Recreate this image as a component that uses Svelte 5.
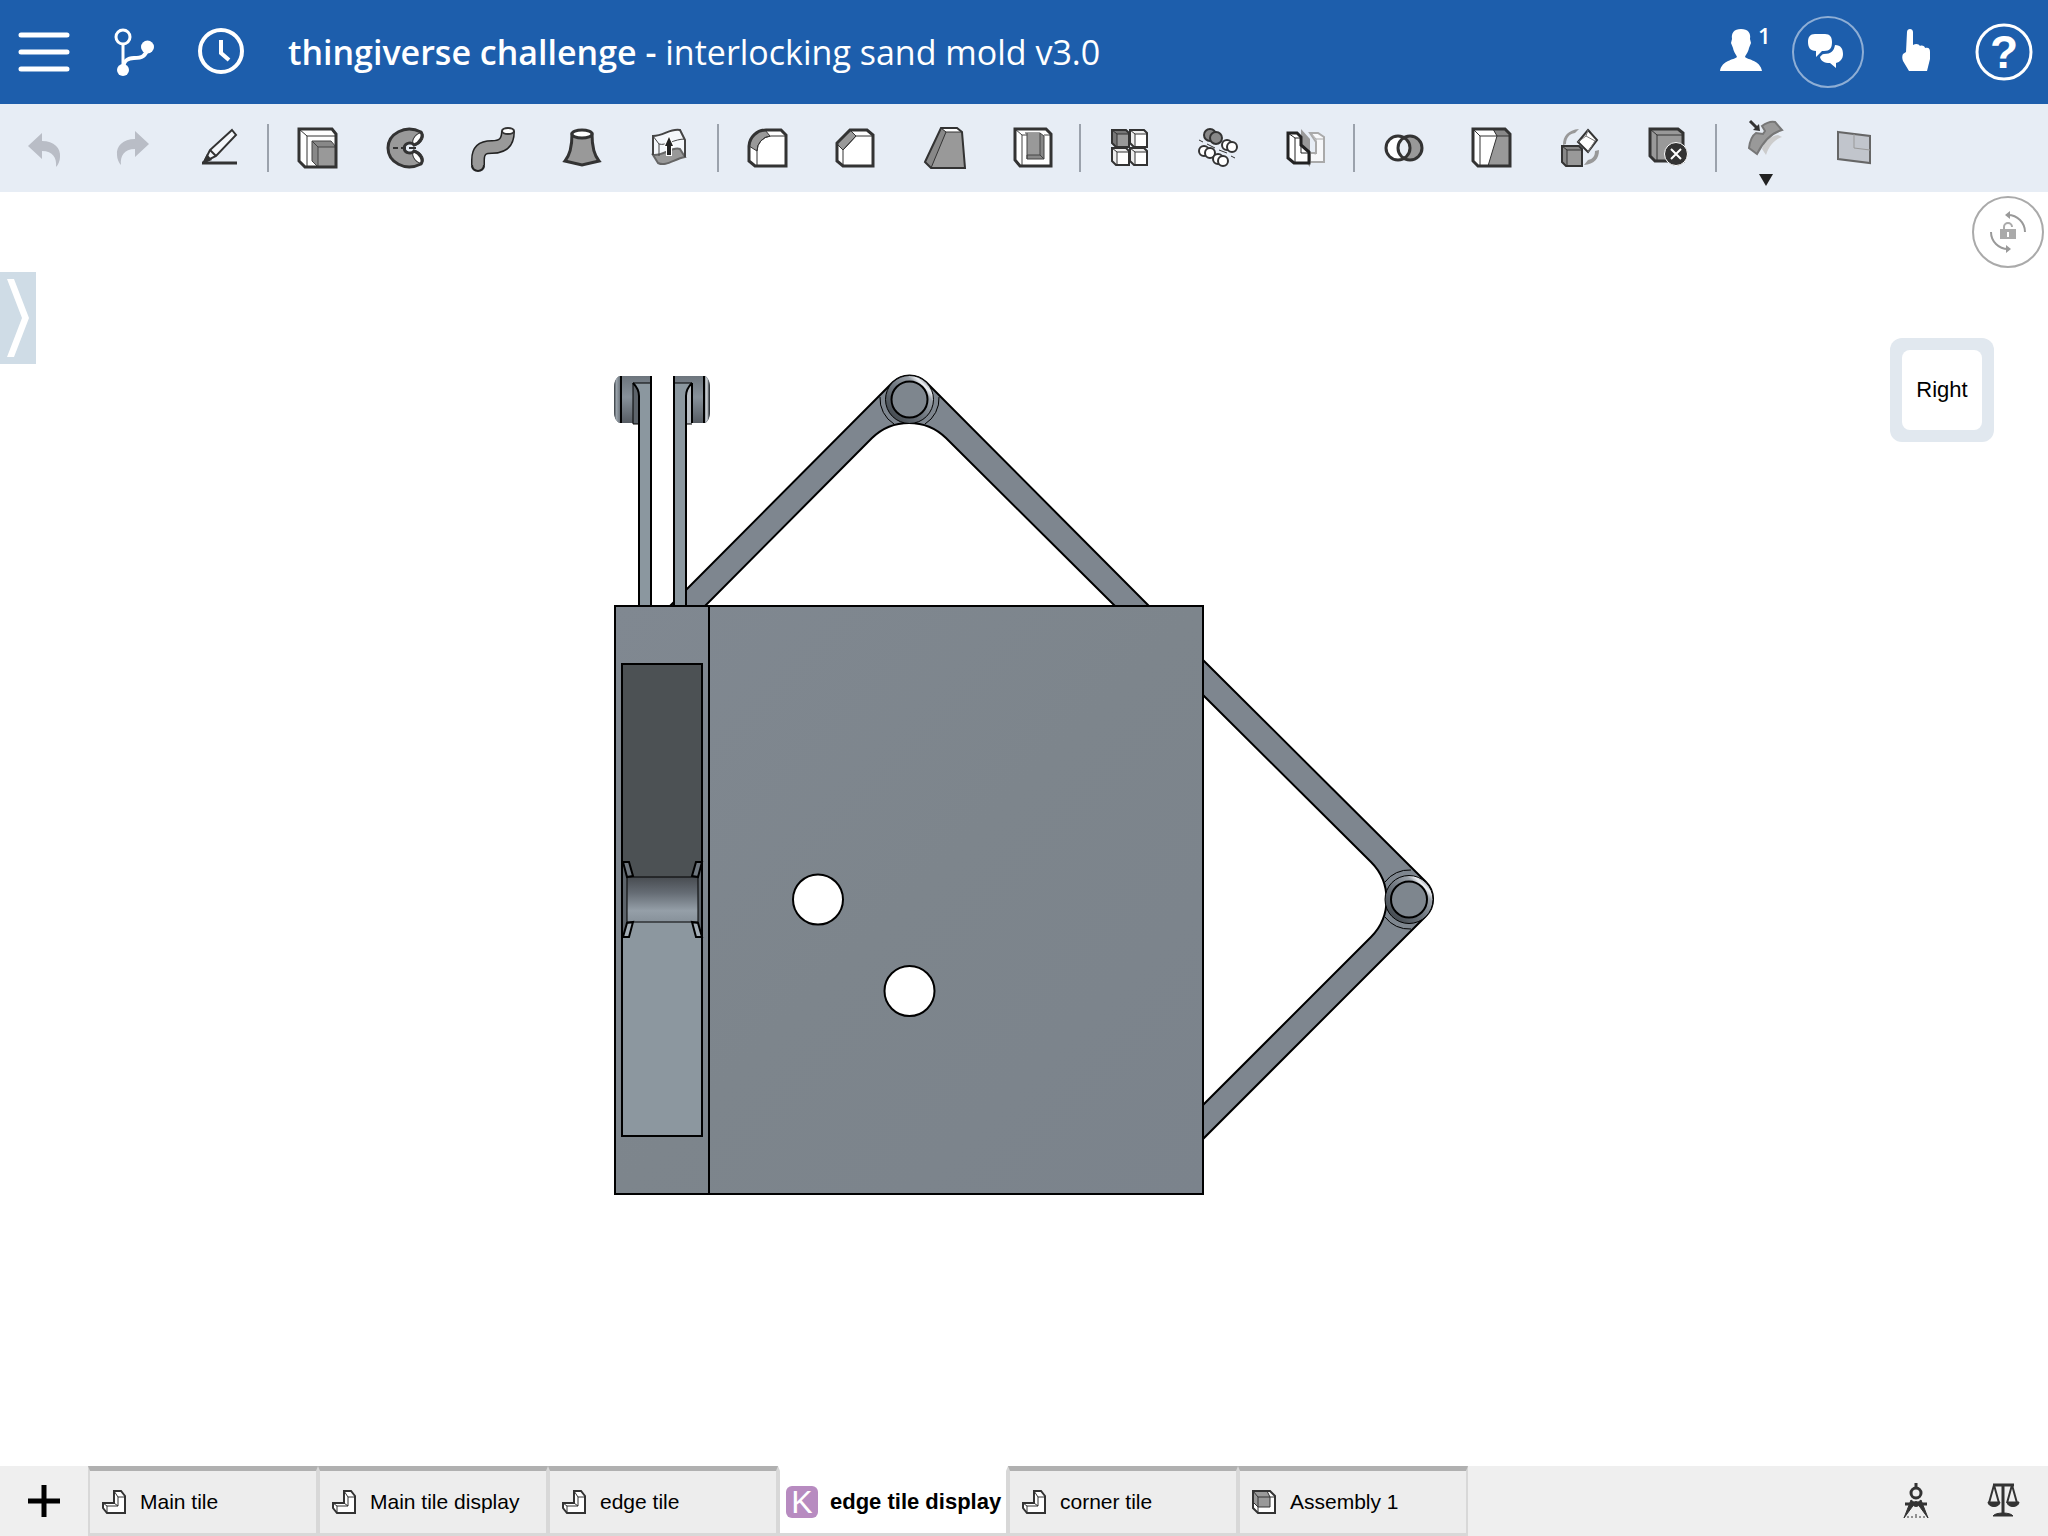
<script lang="ts">
    type Tab = { name: string; kind: string };

    const tabs: Tab[] = [
        { name: "Main tile", kind: "part" },
        { name: "Main tile display", kind: "part" },
        { name: "edge tile", kind: "part" },
        { name: "edge tile display", kind: "user" },
        { name: "corner tile", kind: "part" },
        { name: "Assembly 1", kind: "assembly" }
    ];

    let active = $state("edge tile display");
</script>

<!-- small cube used by the pattern and transform tools -->
{#snippet cube(x: number, y: number, s: number, front: string, top: string)}
    <g transform="translate({x} {y})">
        <path d="M0 0H{s - 3}L{s} 3V{s}H4L0 {s - 4}Z" fill={top} stroke="#333" stroke-width="2" />
        <path d="M5 4H{s - 1}V{s - 1}H5Z" fill={front} />
        <path d="M0 0L5 4H{s}M5 4V{s}" fill="none" stroke="#333" />
    </g>
{/snippet}

<div class="app">
    <header>
        <button aria-label="Menu">
            <svg viewBox="-44 -52 88 104">
                <path d="M-23-17H23M-23 0H23M-23 17H23" fill="none" stroke="#fff" stroke-width="5" stroke-linecap="round" />
            </svg>
        </button>
        <button aria-label="Versions and branches">
            <svg viewBox="-44 -52 88 104">
                <g fill="none" stroke="#fff">
                    <circle cx="-9" cy="-15" r="7" stroke-width="3" />
                    <path d="M-9-7V16" stroke-width="3" />
                    <path d="M-9 16C-8 8-4 6 2 6C10 6 14 4 15-3" stroke-width="4" />
                </g>
                <circle cx="-9" cy="18" r="6" fill="#fff" />
                <circle cx="15.500" cy="-5" r="6.500" fill="#fff" />
            </svg>
        </button>
        <button aria-label="History">
            <svg viewBox="-44 -52 88 104">
                <g fill="none" stroke="#fff">
                    <circle cx="1" cy="-1" r="21" stroke-width="4" />
                    <path d="M1-12V1L9 8" stroke-width="4" />
                </g>
            </svg>
        </button>
        <h1><b>thingiverse challenge -</b> interlocking sand mold v3.0</h1>
        <button aria-label="Collaborators">
            <svg viewBox="-44 -52 88 104">
                <path d="M1-23C8-23 11-19 10-13L11-9L9-4C8 1 6 2 5 5C8 8 20 8 22 19H-20C-18 8-6 8-3 5C-4 2-6 1-7-4L-9-9L-8-13C-9-19-6-23 1-23Z" fill="#fff" />
                <text x="18" y="-8" font-size="22" font-weight="600" fill="#fff">1</text>
            </svg>
        </button>
        <button aria-label="Comments">
            <svg viewBox="-44 -52 88 104">
                <circle r="35" fill="none" stroke="#8eaed5" stroke-width="2" />
                <path d="M-13-18H-3C2-18 4-15 4-10C4-4 2-1-4-1H-6L-12 5V-1C-18-1-20-5-20-10C-20-15-18-18-13-18Z" fill="#fff" />
                <path d="M7-7C13-7 15-3 15 2C15 7 12 10 8 11V16L2 11C-4 11-7 9-8 5C-7 4-6 2-4 2C3 2 6-1 7-7Z" fill="#fff" />
            </svg>
        </button>
        <button aria-label="Touch mode">
            <svg viewBox="-44 -52 88 104">
                <path d="M-9-20C-9-24-3-24-3-20V-7C0-9 3-8 4-6C6-7 9-6 9-4C13-5 14-3 14 0V7L11 19H-7L-13 9C-14 6-14 4-13 2L-10 0Z" fill="#fff" />
            </svg>
        </button>
        <button aria-label="Help">
            <svg viewBox="-44 -52 88 104">
                <circle r="27" fill="none" stroke="#fff" stroke-width="3" />
                <text class="question" y="16" font-size="46" text-anchor="middle" fill="#fff">?</text>
            </svg>
        </button>
    </header>

    <nav class="toolbar" aria-label="Feature tools">
        <button aria-label="Undo" disabled>
            <svg viewBox="-44 -44 88 88">
                <path d="M-16-2L-2-15V-7C10-7 17 0 16 9C16 13 14 17 12 19C13 10 9 3-2 3V11Z" fill="#b9bdc6" />
            </svg>
        </button>
        <button aria-label="Redo" disabled>
            <svg viewBox="-44 -44 88 88">
                <path d="M17-4L3-17V-9C-9-9-16-2-15 7C-15 11-13 15-11 17C-12 8-8 1 3 1V9Z" fill="#b9bdc6" />
            </svg>
        </button>
        <button aria-label="Sketch">
            <svg viewBox="-44 -44 88 88">
                <path d="M-18 15H17" fill="none" stroke="#333" stroke-width="3" />
                <path d="M12-18L16-13L-4 8L-16 14L-10 2Z" fill="#f4f7fb" stroke="#333" stroke-width="2" />
                <path d="M-10 2L-4 8" fill="none" stroke="#333" stroke-width="2" />
                <path d="M-18 16L-13 6L-8 12Z" fill="#333" />
            </svg>
        </button>
        <span class="sep"></span>

        <button aria-label="Extrude">
            <svg viewBox="-44 -44 88 88">
                <path d="M-19-19H14L18-14V19H-13L-19 13Z" fill="#fff" />
                <path d="M-19-19L-11-12H18M-11-12V19" fill="none" stroke="#333" />
                <path d="M-6-7H13L18-1V19H0L-6 13Z" fill="#888" />
                <path d="M0-1H18V19H0Z" fill="#999" />
                <path d="M0 19V-1H18M0-1L-6-7V13L0 19M-6-7H13L18-1" fill="none" stroke="#444" />
                <path d="M-19-19H14L18-14V19H-13L-19 13Z" fill="none" stroke="#333" stroke-width="3" />
            </svg>
        </button>
        <button aria-label="Revolve">
            <svg viewBox="-44 -44 88 88">
                <path d="M15-16C-1-24-18-14-18 0S-1 24 15 16C18 12 14 5 8 3C6 6-1 6-2 0C-1-6 6-6 8-3C14-5 18-12 15-16Z" fill="#999" />
                <ellipse cx="12" cy="-9" rx="4" ry="7" fill="#fff" stroke="#333" transform="rotate(38 12 -9)" />
                <ellipse cx="12" cy="9" rx="4" ry="7" fill="#fff" stroke="#333" transform="rotate(-38 12 9)" />
                <path d="M15-16C-1-24-18-14-18 0S-1 24 15 16C18 12 14 5 8 3C6 6-1 6-2 0C-1-6 6-6 8-3C14-5 18-12 15-16Z" fill="none" stroke="#333" stroke-width="3" />
                <path d="M-13 0H-8M-5 0H0M3 0H10" fill="none" stroke="#333" stroke-width="2" />
            </svg>
        </button>
        <button aria-label="Sweep">
            <svg viewBox="-44 -44 88 88">
                <path d="M-16 17V12C-16 2-11-1-2-1C9-1 14-6 14-17" fill="none" stroke="#222" stroke-width="14" />
                <ellipse cx="-16" cy="18" rx="7" ry="6" fill="#222" />
                <path d="M-16 17V12C-16 2-11-1-2-1C9-1 14-6 14-17" fill="none" stroke="#999" stroke-width="11" />
                <ellipse cx="-16" cy="17" rx="5" ry="5" fill="#999" />
                <ellipse cx="14" cy="-17" rx="6" ry="3" fill="#fff" stroke="#333" stroke-width="2" />
            </svg>
        </button>
        <button aria-label="Loft">
            <svg viewBox="-44 -44 88 88">
                <path d="M-10-14C-10 0-12 7-17 13L0 17L17 13C12 7 10 0 10-14Z" fill="#999" stroke="#333" stroke-width="3" />
                <ellipse cy="-14" rx="10" ry="4" fill="#fff" stroke="#333" stroke-width="3" />
            </svg>
        </button>
        <button aria-label="Thicken">
            <svg viewBox="-44 -44 88 88">
                <path d="M-17-12C-6-12 0-20 10-18L15-8V9C4 10-4 19-12 15L-17 7Z" fill="#f4f7fb" />
                <path d="M-17 7C-6 8 2-2 10 1L15 9C4 11-4 19-12 15Z" fill="#999" stroke="#666" stroke-width="2" />
                <path d="M-17 7V-12C-6-12 0-20 10-18L15-8V9" fill="none" stroke="#444" stroke-width="2" />
                <path d="M-17-12L-11-4V8M-11-4C-4-2 4-9 15-9" fill="none" stroke="#444" />
                <path d="M-1-11L3-2H1V7H-3V-2H-5Z" fill="#222" stroke="#fff" stroke-width="2" paint-order="stroke" />
            </svg>
        </button>
        <span class="sep"></span>

        <button aria-label="Fillet">
            <svg viewBox="-44 -44 88 88">
                <path d="M-19 13V-2A17 17 0 0 1-2-18H13L18-13V18H-13Z" fill="#fff" />
                <path d="M-19-2A17 17 0 0 1-3-18L2-12A15 15 0 0 0-11 3Z" fill="#999" stroke="#333" />
                <path d="M-11 18V3A15 15 0 0 1 3-12H18" fill="none" stroke="#333" />
                <path d="M-19 13V-2A17 17 0 0 1-2-18H13L18-13V18H-13Z" fill="none" stroke="#333" stroke-width="3" />
            </svg>
        </button>
        <button aria-label="Chamfer">
            <svg viewBox="-44 -44 88 88">
                <path d="M-19 13V-5L-6-18H11L17-13V18H-13Z" fill="#fff" />
                <path d="M-19-4L-6-18L0-12L-13 2Z" fill="#999" stroke="#333" />
                <path d="M-13 18V2L0-12H17" fill="none" stroke="#333" />
                <path d="M-19 13V-5L-6-18H11L17-13V18H-13Z" fill="none" stroke="#333" stroke-width="3" />
            </svg>
        </button>
        <button aria-label="Draft">
            <svg viewBox="-44 -44 88 88">
                <path d="M-19 14L-3-20H13L18-16L21 20H-13Z" fill="#999" />
                <path d="M-3-20H13L18-16H2Z" fill="#fff" />
                <path d="M-19 14L-3-20L2-16L-13 20Z" fill="#888" />
                <path d="M-3-20L2-16H18M2-16L-13 20" fill="none" stroke="#333" />
                <path d="M-19 14L-3-20H13L18-16L21 20H-13Z" fill="none" stroke="#333" stroke-width="2" />
            </svg>
        </button>
        <button aria-label="Shell">
            <svg viewBox="-44 -44 88 88">
                <path d="M-17-19H14L19-14V18H-12L-17 12Z" fill="#fff" />
                <path d="M-17-19L-10-13H-5M12-13H19M-10-13V18M-7-15H8" fill="none" stroke="#444" />
                <path d="M-5-15H8V7H-5Z" fill="#999" />
                <path d="M8-15L12-12V11H-5V7H8Z" fill="#888" stroke="#444" />
                <path d="M8 7L12 11M-5-15V11" fill="none" stroke="#444" />
                <path d="M-17-19H14L19-14V18H-12L-17 12Z" fill="none" stroke="#333" stroke-width="3" />
            </svg>
        </button>
        <span class="sep"></span>

        <button aria-label="Linear pattern">
            <svg viewBox="-44 -44 88 88">
                {@render cube(-18, -18, 17, "#999", "#777")}
                {@render cube(0, -18, 17, "#fff", "#eee")}
                {@render cube(-18, 0, 17, "#fff", "#eee")}
                {@render cube(0, 0, 17, "#fff", "#eee")}
            </svg>
        </button>
        <button aria-label="Circular pattern">
            <svg viewBox="-44 -44 88 88">
                <g fill="#fff" stroke="#333" stroke-width="2">
                    <g fill="#888"><circle cx="-8" cy="-13" r="6" /><circle cx="-2" cy="-10" r="6" /></g>
                    <circle cx="9" cy="-3" r="5" /><circle cx="14" cy="-1" r="5" />
                    <circle cx="-14" cy="3" r="5" /><circle cx="-8" cy="5" r="5" />
                    <circle cx="0" cy="11" r="5" /><circle cx="5" cy="13" r="5" />
                </g>
                <path d="M-19-8L-15-6M-11-4L-3 0M1 2L9 5M13 8L17 10" fill="none" stroke="#333" />
            </svg>
        </button>
        <button aria-label="Mirror">
            <svg viewBox="-44 -44 88 88">
                <path d="M4-15H12L18-11V14H4V5H10V-6L4-15Z" fill="#f7f8fa" stroke="#aaa" stroke-width="2" />
                <path d="M5 5L10 6V-9L5-15M10-9H18" fill="none" stroke="#aaa" />
                <path d="M-5-19L4-9V19L-5 9Z" fill="#999" />
                <path d="M-18-15H-9L-5-11V-3L3 4V15H-12L-18 10Z" fill="#fff" stroke="#222" stroke-width="3" />
                <path d="M-18-15L-11-10V15M-11-10H-5M-5-3V5H3" fill="none" stroke="#222" />
            </svg>
        </button>
        <span class="sep"></span>

        <button aria-label="Boolean">
            <svg viewBox="-44 -44 88 88">
                <circle cx="-6" r="12" fill="#fff" />
                <circle cx="6" r="12" fill="#999" />
                <path d="M0-10A12 12 0 0 1 0 10A12 12 0 0 1 0-10Z" fill="#e7edf5" />
                <g fill="none" stroke="#333" stroke-width="3">
                    <circle cx="-6" r="12" />
                    <circle cx="6" r="12" />
                </g>
            </svg>
        </button>
        <button aria-label="Split">
            <svg viewBox="-44 -44 88 88">
                <path d="M-19-19H13L18-14V18H-14L-19 13Z" fill="#fff" />
                <path d="M1-19H13L18-14V18H-4L5-12Z" fill="#999" />
                <path d="M1-19H13L18-12H5Z" fill="#888" />
                <path d="M-19-19L-12-12H18M-12-12V18M1-19L5-12L-4 18" fill="none" stroke="#333" />
                <path d="M-19-19H13L18-14V18H-14L-19 13Z" fill="none" stroke="#333" stroke-width="3" />
            </svg>
        </button>
        <button aria-label="Transform">
            <svg viewBox="-44 -44 88 88">
                <path d="M-17-3C-17-12-12-18-1-19L-5-15C-11-14-14-10-14-4Z" fill="#999" />
                <path d="M19 2C19 11 14 16 4 17L8 12C13 11 15 8 15 3Z" fill="#999" />
                {@render cube(-18, -2, 20, "#999", "#888")}
                <path d="M8-18L17-8L8 4L-2-6Z" fill="#fff" stroke="#333" stroke-width="2" />
                <path d="M8-18L6-12L-2-6M6-12L15-7L8 4" fill="none" stroke="#777" />
            </svg>
        </button>
        <button aria-label="Delete part">
            <svg viewBox="-44 -44 88 88">
                <path d="M-18-19H10L15-15V13H-13L-18 8Z" fill="#999" />
                <path d="M-18-19L-11-13H15M-11-13V13" fill="none" stroke="#333" />
                <path d="M-18-19H10L15-15V13H-13L-18 8Z" fill="none" stroke="#333" stroke-width="3" />
                <circle cx="8" cy="6" r="11.500" fill="#333" stroke="#fff" />
                <path d="M3 1L13 11M13 1L3 11" fill="none" stroke="#fff" stroke-width="2" />
            </svg>
        </button>
        <span class="sep"></span>

        <button aria-label="Surface tools">
            <svg viewBox="-44 -44 88 88">
                <path d="M16-11C8-8 3-2 0 7L-4 1C-2-6 4-12 12-13Z" fill="#ccc" />
                <path d="M-4-22C0-25 5-27 9-26L16-18C5-15-3-6-9 6L-17 0C-16-8-13-13-10-15L-3-14L-1-17Z" fill="#999" stroke="#777" stroke-width="2" />
                <path d="M-16-27L-9-20" fill="none" stroke="#333" stroke-width="3" />
                <path d="M-6-17L-13-18L-7-24Z" fill="#333" />
                <path d="M-7 26H7L0 38Z" fill="#222" />
            </svg>
        </button>
        <button aria-label="Plane">
            <svg viewBox="-44 -44 88 88">
                <path d="M-16-16L16-12V15L-16 11Z" fill="#c1c5cc" stroke="#666" stroke-width="2" />
                <path d="M0-14V0L16 2" fill="none" stroke="#999" />
            </svg>
        </button>
    </nav>

    <main>
        <svg class="model" viewBox="612 373 824 824" role="img" aria-label="Interlocking sand mold, right view">
            <defs>
                <linearGradient id="ring" x1="0" y1="1" x2="1" y2="0">
                    <stop offset="0.1" stop-color="#3f454b" />
                    <stop offset="0.5" stop-color="#737b84" />
                    <stop offset="0.72" stop-color="#9aa1a9" />
                    <stop offset="0.8" stop-color="#eef0f4" />
                    <stop offset="0.87" stop-color="#8f969e" />
                </linearGradient>
                <linearGradient id="barrel" x1="0" y1="0" x2="0" y2="1">
                    <stop offset="0" stop-color="#484c51" />
                    <stop offset="0.35" stop-color="#656c74" />
                    <stop offset="0.75" stop-color="#959fa8" />
                    <stop offset="1" stop-color="#87919a" />
                </linearGradient>
                <linearGradient id="head" x1="0" y1="0" x2="0" y2="1">
                    <stop offset="0" stop-color="#6d757d" />
                    <stop offset="0.45" stop-color="#87919a" />
                    <stop offset="1" stop-color="#565c63" />
                </linearGradient>
                <linearGradient id="face" x1="0" y1="0" x2="1" y2="1">
                    <stop offset="0" stop-color="#808891" />
                    <stop offset="0.5" stop-color="#7d858c" />
                    <stop offset="1" stop-color="#7b838c" />
                </linearGradient>
                <linearGradient id="shineLeft">
                    <stop offset="0" stop-color="#32373c" />
                    <stop offset="0.4" stop-color="#9aa3ab" />
                    <stop offset="1" stop-color="#6d757d" />
                </linearGradient>
                <linearGradient id="shineRight">
                    <stop offset="0" stop-color="#6d757d" />
                    <stop offset="0.5" stop-color="#d5d9dd" />
                    <stop offset="0.8" stop-color="#4a5056" />
                    <stop offset="1" stop-color="#22262a" />
                </linearGradient>
            </defs>

            <!-- top bracket -->
            <path class="arm" d="M670 606L893 382A24 24 0 0 1 926 382L1149 606H1115L946 438A53 53 0 0 0 872 438L705 606Z" />
            <path class="thin" d="M880 397A30 30 0 0 0 894 424M939 397A30 30 0 0 1 925 424" />
            <circle class="knob" cx="909.500" cy="399.500" r="24" />
            <circle class="pin" cx="909.500" cy="399.500" r="18" />

            <!-- side bracket -->
            <path class="arm" d="M1203 660L1426 882A24 24 0 0 1 1426 916L1203 1139V1105L1371 937A53 53 0 0 0 1371 862L1203 695Z" />
            <path class="thin" d="M1385 882A30 30 0 0 1 1411 870M1385 917A30 30 0 0 0 1411 929" />
            <circle class="knob" cx="1409" cy="899.500" r="24" />
            <circle class="pin" cx="1409" cy="899.500" r="18" />

            <!-- upright clips -->
            <path d="M651 376H620C616 377 614 382 614 388V411C614 417 616 422 620 423H651Z" fill="url(#head)" />
            <path d="M620 376C616 377 614 382 614 388V411C614 417 616 422 620 423Z" fill="url(#shineLeft)" />
            <path d="M674 376H705C708 377 710 382 710 388V411C710 417 708 422 705 423H674Z" fill="url(#head)" />
            <path d="M704 376C708 377 710 382 710 388V411C710 417 708 422 704 423Z" fill="url(#shineRight)" />
            <path d="M633 383C637 387 639 391 639 396V424H633Z" fill="#5d646b" />
            <path d="M692 383C688 387 686 391 686 396V424H692Z" fill="#b9bfc5" />
            <path d="M639 606V394L634 383H651V606Z" fill="#8b979f" />
            <path d="M674 606V383H691L686 394V606Z" fill="#8b979f" />
            <path class="edge" d="M639 606V396C639 391 637 387 633 383M651 376V606M674 376V606M686 606V396C686 391 688 387 692 383M621 376V423M692 383V423M704 376V423" />
            <path class="thin" d="M633 383H651M674 383H692M633 383V424H639M686 424H692" />

            <!-- body -->
            <path class="edge" d="M615 606H1203V1194H615Z" fill="url(#face)" />
            <path class="edge" d="M709 606V1194" />
            <path d="M622 664H702V880H622Z" fill="#4c5154" />
            <path d="M622 920H702V1136H622Z" fill="#8c979f" />
            <path d="M623 864L628 877V922L623 936ZM702 864L697 877V922L702 936Z" fill="#5d646b" />
            <path d="M627 877H698V922H627Z" fill="url(#barrel)" stroke="#000" />
            <path class="edge" d="M623 862H629L633 876L627 877ZM702 862H696L692 876L698 877Z" fill="#6f777f" />
            <path class="edge" d="M623 937H629L633 922L627 923ZM702 937H696L692 922L698 923Z" fill="#a3adb5" />
            <path class="edge" d="M622 664H702V1136H622Z" />
            <circle class="hole" cx="818" cy="899.500" r="25" />
            <circle class="hole" cx="909.500" cy="991" r="25" />
        </svg>

        <button class="drawer" aria-label="Show feature list">
            <svg viewBox="0 0 36 92">
                <path d="M7 7H14L29 46L14 85H7L22 46Z" fill="#fff" />
            </svg>
        </button>

        <button class="lock" aria-label="Rotation lock">
            <svg viewBox="-36 -36 72 72">
                <circle r="35" fill="#fff" stroke="#aaa" stroke-width="2" />
                <path d="M0-17A17 17 0 0 1 17 0M0 17A17 17 0 0 1-17 0" fill="none" stroke="#999" stroke-width="2" />
                <path d="M-3-17L2-21V-13ZM3 17L-2 13V21Z" fill="#999" />
                <path d="M-8-3H8V7H-8Z" fill="#aaa" />
                <path d="M-4-3V-5A4 4 0 0 1 4-5" fill="none" stroke="#aaa" stroke-width="2" />
                <path d="M-1 0H1V5H-1Z" fill="#fff" />
            </svg>
        </button>

        <button class="view-cube"><span>Right</span></button>
    </main>

    <footer>
        <button class="add" aria-label="Add tab">
            <svg viewBox="0 0 32 32">
                <path d="M0 16H32M16 0V32" fill="none" stroke="#000" stroke-width="5" />
            </svg>
        </button>
        {#each tabs as tab}
            <button class="tab" class:active={active === tab.name} onclick={() => (active = tab.name)}>
                {#if tab.kind === "user"}
                    <span class="avatar">K</span>
                {:else if tab.kind === "part"}
                    <svg class="tab-icon" viewBox="0 0 26 26">
                        <path d="M13 2H20L24 7V24H6L2 19V14H13Z" fill="#fff" stroke="#333" stroke-width="2" />
                        <path d="M13 2L17 8H24M17 8V17H6V24M2 14L6 17M13 14L17 17" fill="none" stroke="#333" />
                    </svg>
                {:else}
                    <svg class="tab-icon" viewBox="0 0 26 26">
                        <path d="M2 2H19L24 7V24H7L2 19Z" fill="#fff" />
                        <path d="M2 2H16L19 8V18H7L2 13Z" fill="#999" />
                        <path d="M2 2L7 8H24M7 8V24M7 18H19V8L16 2M2 13L7 18" fill="none" stroke="#333" />
                        <path d="M2 2H19L24 7V24H7L2 19Z" fill="none" stroke="#333" stroke-width="2" />
                    </svg>
                {/if}
                <span>{tab.name}</span>
            </button>
        {/each}
        <div class="meta">
            <button aria-label="Measure">
                <svg viewBox="-22 -18 44 36">
                    <path d="M-5-1L-12 17L-1 2ZM5-1L12 17L1 2Z" fill="#333" stroke="#333" />
                    <circle cy="-8" r="5" fill="none" stroke="#333" stroke-width="3" />
                    <path d="M0-18V-13M-11 3H11" fill="none" stroke="#333" stroke-width="3" />
                    <circle cy="3" r="3" fill="#333" />
                    <path d="M-8 15V17M-4 15V17M0 13V17M4 15V17M8 15V17" fill="none" stroke="#333" />
                </svg>
            </button>
            <button aria-label="Mass properties">
                <svg viewBox="-22 -18 44 36">
                    <path d="M-11-16H10M-1-16V13" fill="none" stroke="#333" stroke-width="3" />
                    <path d="M-10-16L-15 2M-10-16L-5 2M8-16L13 2M8-16L3 2" fill="none" stroke="#333" stroke-width="2" />
                    <path d="M-16 1H-4C-4 7-16 7-16 1ZM15 1H3C3 7 15 7 15 1ZM-11 15C-9 11 7 11 9 15Z" fill="#333" stroke="#333" />
                </svg>
            </button>
        </div>
    </footer>
</div>

<style>
    :global(body) {
        margin: 0;
        background: #fff;
    }

    .app {
        display: flex;
        flex-direction: column;
        min-height: 100vh;
        font-family: "Liberation Sans", Arial, sans-serif;
        color: #000;
    }

    button {
        flex: none;
        padding: 0;
        border: none;
        background: none;
        font-family: inherit;
        color: inherit;
    }

    svg {
        display: block;
    }

    header {
        display: flex;
        align-items: center;
        height: 104px;
        background: #1d5eac;
        color: #fff;
    }

    header svg {
        width: 88px;
        height: 104px;
    }

    header text {
        font-family: "Open Sans", sans-serif;
    }

    header .question {
        font-family: "Liberation Sans", Arial, sans-serif;
        font-weight: bold;
    }

    h1 {
        flex: 1;
        margin: 0 0 0 24px;
        font-family: "Open Sans", sans-serif;
        font-size: 34px;
        font-weight: 400;
        white-space: nowrap;
    }

    h1 b {
        font-weight: 600;
    }

    .toolbar {
        display: flex;
        align-items: center;
        height: 88px;
        background: #e7edf5;
    }

    .toolbar svg {
        width: 88px;
        height: 88px;
    }

    .sep {
        width: 2px;
        height: 48px;
        margin: 0 5px 0 3px;
        background: #9ba2ac;
    }

    main {
        position: relative;
        display: flex;
        flex: 1;
        justify-content: center;
        align-items: flex-start;
        padding-top: 181px;
    }

    .model {
        width: 824px;
        height: 824px;
    }

    .arm {
        fill: #7e868f;
        stroke: #000;
        stroke-width: 2;
    }

    .edge {
        stroke: #000;
        stroke-width: 2;
    }

    .edge:not([fill]) {
        fill: none;
    }

    .thin {
        fill: none;
        stroke: #000;
    }

    .knob {
        fill: url(#ring);
        stroke: #000;
    }

    .pin {
        fill: #7e868e;
        stroke: #000;
        stroke-width: 2;
    }

    .hole {
        fill: #fff;
        stroke: #000;
        stroke-width: 2;
    }

    .drawer {
        position: absolute;
        top: 80px;
        left: 0;
        width: 36px;
        height: 92px;
        background: #cfdce6;
    }

    .lock {
        position: absolute;
        top: 4px;
        right: 4px;
        width: 72px;
        height: 72px;
    }

    .view-cube {
        position: absolute;
        top: 146px;
        right: 54px;
        padding: 12px;
        border-radius: 12px;
        background: #e1e8ef;
        font-size: 22px;
    }

    .view-cube span {
        display: block;
        width: 80px;
        border-radius: 8px;
        background: #fff;
        line-height: 80px;
    }

    footer {
        display: flex;
        height: 70px;
        background: #efefef;
    }

    .add {
        display: flex;
        align-items: center;
        justify-content: center;
        width: 88px;
    }

    .add svg {
        width: 32px;
        height: 32px;
    }

    .tab {
        display: flex;
        align-items: center;
        gap: 13px;
        width: 230px;
        padding-left: 11px;
        border: 2px solid #d8d8d8;
        border-top: 5px solid #b0b0b0;
        border-bottom-width: 3px;
        background: #ededed;
        font-size: 21px;
        white-space: nowrap;
    }

    .tab.active {
        gap: 12px;
        padding-left: 6px;
        border-top-color: #fff;
        background: #fff;
        font-size: 22px;
        font-weight: bold;
    }

    .tab-icon {
        width: 26px;
        height: 26px;
    }

    .avatar {
        width: 32px;
        height: 32px;
        border-radius: 6px;
        background: #b78bc0;
        color: #fff;
        font-size: 32px;
        font-weight: normal;
        line-height: 32px;
        text-align: center;
    }

    .meta {
        display: flex;
        align-items: center;
        margin-left: auto;
    }

    .meta button {
        width: 88px;
    }

    .meta svg {
        width: 44px;
        height: 36px;
        margin: 0 auto;
    }
</style>
